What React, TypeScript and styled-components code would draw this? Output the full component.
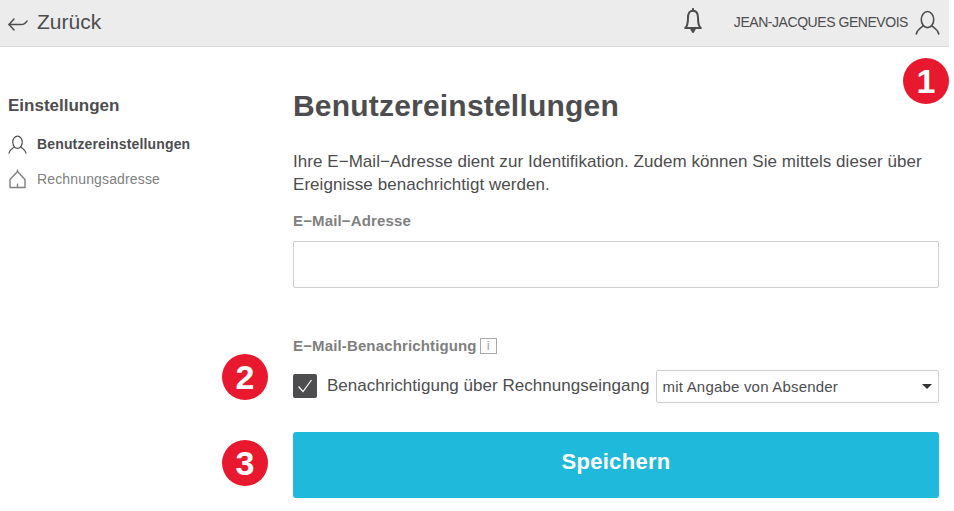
import React from 'react';
import styled, { createGlobalStyle } from 'styled-components';

const GlobalStyle = createGlobalStyle`
  html, body {
    margin: 0;
    padding: 0;
    background: #fff;
    font-family: 'Liberation Sans', Arial, sans-serif;
    color: #4d4d4f;
  }
`;

function UserIcon({ size }: { size: number }) {
  return (
    <svg width={size} height={size} viewBox="0 0 24 24" fill="none" stroke="#4d4d4f" strokeWidth="1.5" strokeLinecap="round">
      <ellipse cx="12" cy="9.2" rx="6" ry="7.7" />
      <path d="M8.2 15 C6 17 2.4 18 1.2 23" />
      <path d="M15.8 15 C18 17 21.6 18 22.8 23" />
    </svg>
  );
}

/**
 * The settings page, with its numbered callouts on top
 */
function App() {
  return (
    <Page>
      <GlobalStyle />
      <Header>
        <BackLink>
          <svg width="20" height="18" viewBox="0 0 20 18" fill="none" stroke="#4d4d4f" strokeWidth="1.5" strokeLinecap="round" strokeLinejoin="round">
            <path d="M1 11.5 L13 11.5 Q17 11.5 19 8" />
            <path d="M6 6 L1 11.5 L6 17" />
          </svg>
          <BackLabel>Zurück</BackLabel>
        </BackLink>
        <UserArea>
          <svg width="18" height="29" viewBox="0 0 16 26" fill="none" stroke="#4d4d4f" strokeWidth="1.8" strokeLinecap="round" strokeLinejoin="round">
            <path d="M1 18 C3 16.5 3.5 14.5 3.5 9 C3.5 4.5 5 2.5 8 2.5 C11 2.5 12.5 4.5 12.5 9 C12.5 14.5 13 16.5 15 18 Z" />
            <path d="M8 0.8 L8 2.5" />
            <path d="M6.5 19 L9.5 19 L8 21.5 Z" fill="#4d4d4f" />
          </svg>
          <UserName>JEAN-JACQUES GENEVOIS</UserName>
          <UserIcon size={25} />
        </UserArea>
      </Header>

      <Body>
        <Sidebar>
          <SideTitle>Einstellungen</SideTitle>
          <SideItem $active>
            <UserIcon size={19} />
            Benutzereinstellungen
          </SideItem>
          <SideItem>
            <svg width="19" height="20" viewBox="0 0 19 20" fill="none" stroke="#808080" strokeWidth="1.4" strokeLinejoin="round">
              <path d="M2 18.5 L2 10.5 L9.5 2.5 L17 10.5 L17 18.5 Z" />
              <path d="M9.5 0.5 L9.5 2.5" />
              <path d="M9.5 14.5 L9.5 18.5" />
            </svg>
            Rechnungsadresse
          </SideItem>
        </Sidebar>

        <Content>
          <Title>Benutzereinstellungen</Title>
          <Intro>
            Ihre E−Mail−Adresse dient zur Identifikation. Zudem können Sie mittels dieser über
            <br />
            Ereignisse benachrichtigt werden.
          </Intro>
          <FieldLabel>E−Mail−Adresse</FieldLabel>
          <TextInput type="text" />
          <NotifyLabel>
            E−Mail-Benachrichtigung
            <InfoBox>i</InfoBox>
          </NotifyLabel>
          <NotifyRow>
            <CheckBox>
              <svg width="16" height="14" viewBox="0 0 16 14" fill="none" stroke="#fff" strokeWidth="1.2">
                <path d="M1.5 7.5 L6 12.5 L14.5 1" />
              </svg>
            </CheckBox>
            <NotifyText>Benachrichtigung über Rechnungseingang</NotifyText>
            <SelectBox>
              mit Angabe von Absender
              <Caret />
            </SelectBox>
          </NotifyRow>
          <SaveButton>Speichern</SaveButton>
        </Content>
      </Body>

      <Badge $x={903} $y={58}>1</Badge>
      <Badge $x={222} $y={354}>2</Badge>
      <Badge $x={222} $y={440}>3</Badge>
    </Page>
  );
}

export default App;

const Page = styled.div`
  position: relative;
  width: 954px;
  height: 511px;
  overflow: hidden;
`;

const Header = styled.header`
  display: flex;
  align-items: center;
  justify-content: space-between;
  box-sizing: border-box;
  width: 949px;
  height: 47px;
  padding: 0 9px 2px 8px;
  background: #ececec;
  border-bottom: 1px solid #d9d9d9;
`;

const BackLink = styled.div`
  display: flex;
  align-items: center;
  gap: 9px;
`;

const BackLabel = styled.span`
  font-size: 21px;
`;

const UserArea = styled.div`
  display: flex;
  align-items: center;
`;

const UserName = styled.span`
  margin: 0 7px 0 32px;
  font-size: 14px;
  letter-spacing: -0.45px;
`;

const Body = styled.div`
  display: flex;
`;

const Sidebar = styled.nav`
  box-sizing: border-box;
  width: 293px;
  padding: 49px 0 0 8px;
`;

const SideTitle = styled.h2`
  margin: 0 0 18px;
  font-size: 17px;
  line-height: 20px;
  font-weight: bold;
`;

const SideItem = styled.div<{ $active?: boolean }>`
  display: flex;
  align-items: center;
  gap: 10px;
  height: 20px;
  margin-bottom: 15px;
  font-size: 14px;
  letter-spacing: 0.15px;
  font-weight: ${(p) => (p.$active ? 'bold' : 'normal')};
  color: ${(p) => (p.$active ? '#4d4d4f' : '#808080')};
`;

const Content = styled.main`
  width: 646px;
  padding-top: 41px;
`;

const Title = styled.h1`
  margin: 0 0 26px;
  font-size: 30px;
  line-height: 36px;
  letter-spacing: 0.2px;
  font-weight: bold;
`;

const Intro = styled.p`
  margin: 0 0 16px;
  font-size: 17px;
  line-height: 23px;
  letter-spacing: 0.05px;
`;

const FieldLabel = styled.div`
  margin-bottom: 12px;
  font-size: 15px;
  line-height: 17px;
  letter-spacing: 0.14px;
  font-weight: bold;
  color: #808080;
`;

const TextInput = styled.input`
  display: block;
  box-sizing: border-box;
  width: 646px;
  height: 47px;
  border: 1px solid #cfcfcf;
  border-radius: 2px;
  background: #fff;
`;

const NotifyLabel = styled(FieldLabel)`
  display: flex;
  align-items: center;
  gap: 3px;
  margin: 49px 0 15px;
`;

const InfoBox = styled.span`
  display: flex;
  align-items: center;
  justify-content: center;
  box-sizing: border-box;
  width: 17px;
  height: 16px;
  border: 1px solid #a8a8a8;
  font-size: 13px;
  font-weight: normal;
  color: #a0a0a0;
`;

const NotifyRow = styled.div`
  display: flex;
  align-items: center;
  height: 34px;
`;

const CheckBox = styled.div`
  display: flex;
  align-items: center;
  justify-content: center;
  width: 24px;
  height: 24px;
  border-radius: 2px;
  background: #4d4d4f;
`;

const NotifyText = styled.span`
  margin: 0 6px 0 10px;
  font-size: 17px;
  letter-spacing: 0.03px;
  white-space: nowrap;
`;

const SelectBox = styled.div`
  display: flex;
  align-items: center;
  justify-content: space-between;
  flex: 1;
  box-sizing: border-box;
  height: 33px;
  padding: 0 6px;
  border: 1px solid #cfcfcf;
  border-radius: 2px;
  font-size: 15px;
  letter-spacing: 0.2px;
`;

const Caret = styled.span`
  width: 0;
  height: 0;
  border-left: 5px solid transparent;
  border-right: 5px solid transparent;
  border-top: 5px solid #333;
`;

const SaveButton = styled.button`
  display: block;
  width: 646px;
  height: 66px;
  margin-top: 29px;
  padding: 0 0 7px;
  border: 0;
  border-radius: 3px;
  background: #1fb9dc;
  color: #fff;
  font-family: inherit;
  font-size: 22px;
  letter-spacing: 0.3px;
  font-weight: bold;
`;

const Badge = styled.div<{ $x: number; $y: number }>`
  position: absolute;
  left: ${(p) => p.$x}px;
  top: ${(p) => p.$y}px;
  display: flex;
  align-items: center;
  justify-content: center;
  width: 46px;
  height: 46px;
  border-radius: 50%;
  background: #e8192f;
  color: #fff;
  font-size: 34px;
  font-weight: bold;
`;
